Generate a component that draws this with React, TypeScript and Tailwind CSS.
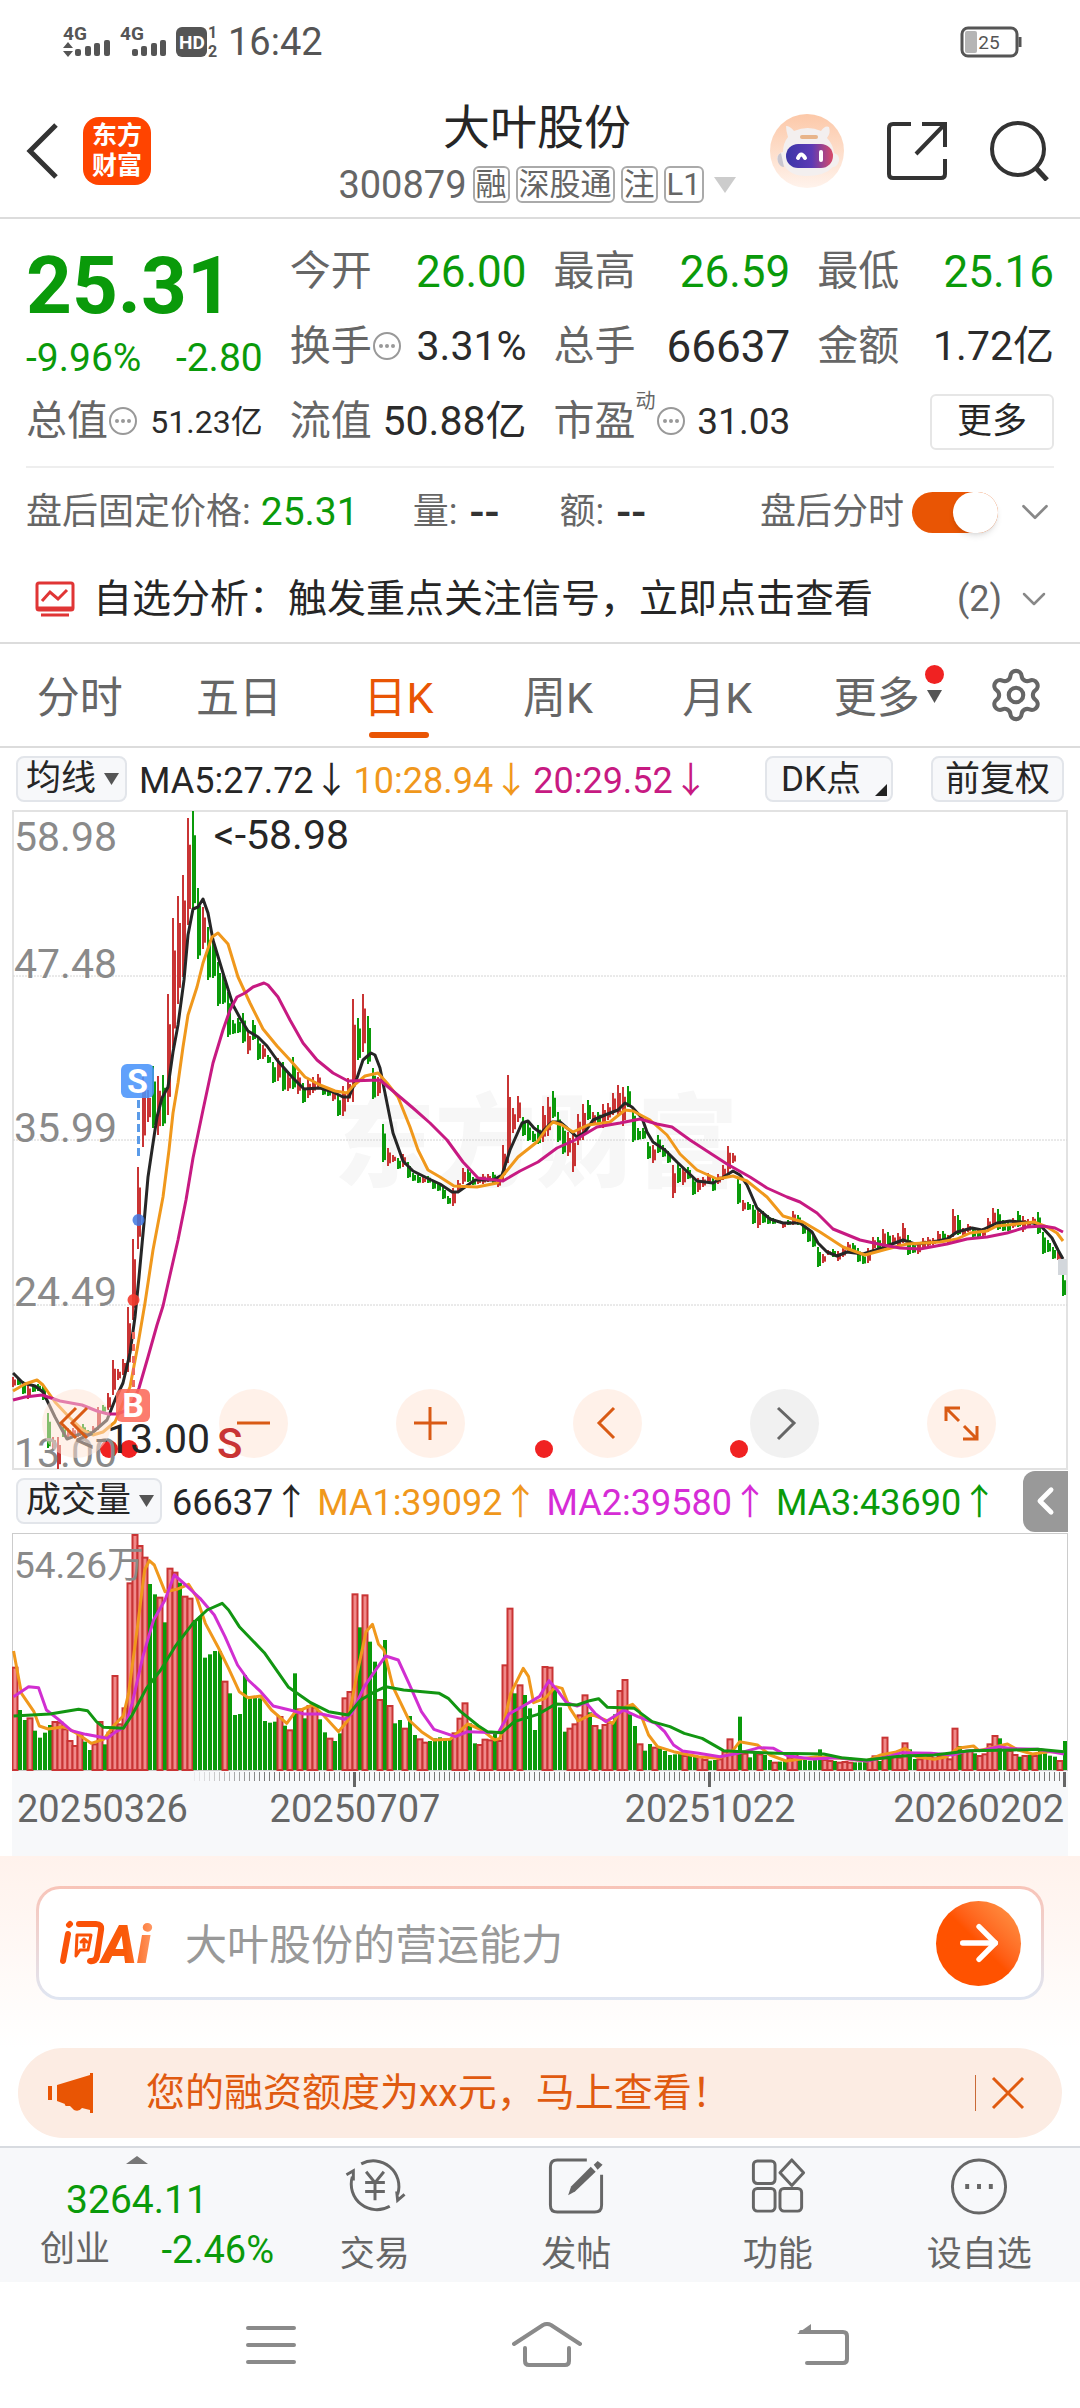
import { useState } from "react";
import type { ReactNode } from "react";
import { ArrowRight, ChevronDown, ChevronLeft, Settings } from "lucide-react";

// r = up day, g = down day, then high-low in chart units
const CANDLES = `
r1377-1387 g1377-1385 g1381-1394 r1385-1399 g1384-1392 g1384-1391 g1385-1400 g1413-1448 r1437-1450 r1437-1469
g1427-1437 r1428-1437 r1428-1437 r1430-1437 g1424-1437 g1430-1435 r1426-1433 r1407-1430 g1405-1412 r1393-1410
r1360-1395 r1369-1380 r1359-1375 r1307-1372 r1239-1320 r1167-1249 r1070-1147 r1090-1122 g1066-1128 r1076-1135
g1075-1126 r994-1115 r918-1048 r896-1004 r875-977 r818-925 g811-908 g888-959 r907-949 g927-980
g937-978 g962-1006 g975-1004 g992-1037 g1020-1034 g1018-1033 g1013-1043 r1030-1054 g1020-1040 g1038-1060
r1045-1059 g1055-1063 g1062-1083 r1058-1081 g1062-1091 r1073-1091 g1057-1089 r1072-1094 g1083-1103 r1079-1098
r1077-1093 r1074-1088 g1085-1095 g1087-1096 r1090-1101 g1095-1116 r1086-1116 r1078-1102 r999-1102 g1018-1060
r994-1052 g1016-1064 g1068-1099 r1077-1096 g1124-1162 r1148-1166 r1155-1162 g1158-1169 r1154-1167 g1162-1178
g1173-1181 g1175-1183 r1177-1183 g1176-1183 g1180-1189 g1182-1191 g1187-1199 g1196-1204 r1188-1206 r1180-1193
r1168-1184 g1169-1182 g1177-1185 r1177-1184 r1174-1184 r1174-1182 g1172-1183 r1178-1187 r1145-1180 r1075-1163
r1108-1133 r1096-1122 g1117-1136 g1123-1141 g1131-1142 g1125-1144 r1106-1142 r1097-1136 g1091-1118 g1112-1142
g1123-1154 r1132-1156 r1133-1172 r1114-1145 r1104-1140 g1100-1120 r1112-1125 g1112-1123 r1104-1128 r1103-1120
r1093-1115 r1085-1117 r1087-1126 g1086-1107 g1107-1142 g1128-1140 g1128-1139 g1142-1159 r1145-1163 g1135-1153
g1145-1157 g1151-1163 r1165-1198 g1163-1183 r1167-1185 g1167-1179 g1177-1195 r1178-1192 r1177-1187 r1173-1183
g1178-1191 r1174-1184 r1165-1180 r1146-1173 r1153-1163 g1177-1204 r1200-1211 g1202-1210 g1205-1224 r1208-1228
g1211-1223 g1215-1224 g1218-1224 g1220-1223 r1222-1228 g1220-1225 r1211-1225 g1215-1225 g1223-1234 g1228-1242
g1235-1247 g1247-1267 r1254-1263 r1250-1255 g1249-1257 r1251-1261 r1247-1257 r1242-1252 g1243-1252 g1248-1262
g1254-1264 r1248-1263 r1237-1250 g1237-1250 r1229-1247 g1232-1247 r1235-1245 r1233-1247 r1223-1243 g1235-1255
g1243-1253 r1242-1254 r1238-1249 r1237-1247 r1238-1245 r1231-1243 g1231-1242 r1235-1243 r1209-1237 g1215-1235
r1228-1235 r1224-1232 g1228-1237 g1228-1237 r1228-1237 r1218-1232 r1208-1227 g1209-1230 g1220-1231 g1222-1231
r1218-1228 g1211-1227 r1216-1232 r1219-1227 r1217-1224 g1212-1234 g1232-1254 g1240-1252 g1247-1259 r1252-1260
g1275-1296`
  .trim()
  .split(/\s+/)
  .map((item) => {
    const [high, low] = item.slice(1).split("-").map(Number);
    return { up: item[0] === "r", high, low };
  });

const VOLUMES = `
r620 g750 g780 r772 g812 g833 g818 g795 r783 r785 r805 r840 r855 r822 g845 g870 r850 r783 g853 r815
r645 r790 r742 r367 r222 r255 r290 g372 g403 r410 g487 r323 r335 g368 r407 r413 g480 g470 g593 g583
g573 g573 r662 g700 g765 g762 g645 g710 g710 g715 g783 g788 g785 r768 g797 r808 g640 r745 g775 r735
r740 g778 g817 r833 g843 g820 r712 r693 r400 g502 r403 g545 g605 r717 g540 r735 g790 g780 r803 g768
g825 r835 r845 g843 g835 g832 g838 g840 r817 r773 r727 g790 g850 r852 r836 r838 g818 r840 r613 r443
g700 r673 g705 g745 g810 g735 r618 r620 g690 g742 g815 r803 r790 r763 r703 g757 r795 g808 r792 r785
g763 r690 r657 g763 g798 r850 g872 g852 r860 g865 g873 g885 g883 g880 r885 g885 g885 r888 r897 g902
g900 r895 r872 r835 r875 g770 r878 g892 g878 r880 g885 g900 r905 g905 g902 r890 r878 g895 g900 g902
g900 g868 r897 r900 g903 r905 r903 r905 g907 g907 g905 r900 r886 g903 r830 g885 r885 r890 r847 g868
g897 r895 r890 r885 r892 r885 r885 r895 r803 g858 r870 r870 g880 r885 r880 r850 r825 g835 g865 r870
r882 g890 r885 g885 r885 g865 g880 g887 g890 r900 g843`
  .trim()
  .split(/\s+/)
  .map((item) => ({ up: item[0] === "r", top: 1460 + Number(item.slice(1)) / 3 }));

const MA5 =
  "13,1373 23,1383 35,1386 43,1392 55,1417 67,1439 80,1434 92,1433 107,1420 115,1400 123,1383 130,1353 135,1317 139,1277 144,1223 148,1177 152,1150 157,1117 162,1098 168,1087 173,1052 178,1025 184,980 188,935 193,909 198,907 203,899 208,913 213,940 223,973 233,1005 240,1018 248,1031 258,1037 267,1046 277,1060 292,1077 304,1089 320,1088 333,1092 343,1097 349,1097 357,1078 363,1060 371,1053 375,1055 380,1068 387,1103 393,1133 403,1161 413,1171 427,1178 440,1184 452,1192 458,1192 475,1180 493,1180 502,1175 510,1150 522,1123 528,1121 534,1128 541,1133 552,1122 560,1122 567,1128 577,1137 585,1132 593,1120 605,1115 618,1110 625,1103 632,1107 642,1118 647,1132 653,1142 665,1150 677,1162 697,1181 713,1183 722,1178 733,1171 740,1175 747,1185 757,1208 770,1219 783,1223 800,1223 812,1232 818,1243 827,1252 837,1256 847,1252 863,1254 882,1248 892,1244 903,1240 915,1244 933,1242 947,1239 957,1232 972,1228 982,1230 997,1223 1010,1221 1033,1223 1040,1225 1052,1238 1058,1250 1063,1259";
const MA10 =
  "13,1391 25,1384 37,1380 43,1385 55,1402 70,1418 83,1430 93,1435 103,1432 115,1422 123,1403 130,1387 137,1350 145,1303 153,1250 163,1197 169,1150 173,1113 178,1083 183,1047 188,1015 197,987 203,963 212,937 218,933 228,944 238,977 250,1003 263,1029 277,1046 290,1060 305,1077 320,1085 335,1091 347,1093 353,1086 365,1076 378,1073 387,1083 398,1097 410,1127 418,1150 428,1170 440,1177 454,1186 477,1187 497,1183 505,1173 518,1157 537,1142 547,1128 553,1122 562,1125 573,1132 588,1125 610,1122 625,1110 633,1111 650,1120 667,1135 680,1154 697,1170 717,1179 733,1176 747,1181 767,1197 783,1216 803,1222 820,1232 843,1247 865,1255 887,1249 907,1244 940,1242 957,1239 970,1233 987,1231 997,1226 1017,1224 1034,1222 1047,1227 1057,1233 1063,1241";
const MA20 =
  "13,1400 25,1397 42,1395 60,1401 82,1405 97,1411 108,1414 117,1414 125,1411 133,1402 139,1388 148,1357 157,1325 163,1306 170,1275 178,1240 186,1200 193,1158 203,1110 213,1063 223,1030 230,1010 237,997 245,993 253,987 264,983 268,985 278,997 290,1020 303,1043 317,1060 333,1073 348,1081 380,1080 400,1097 413,1108 430,1123 447,1140 463,1162 478,1178 503,1181 520,1171 538,1162 557,1148 575,1140 597,1127 620,1123 640,1119 657,1124 672,1127 690,1140 710,1153 727,1164 750,1177 767,1188 787,1197 800,1202 817,1213 833,1229 860,1240 883,1245 900,1248 920,1249 947,1244 967,1239 987,1237 1007,1233 1027,1227 1043,1226 1055,1228 1063,1232";

const VOL_MA1 =
  "38,573 60,700 95,755 110,798 135,807 180,800 215,820 255,850 290,838 320,795 345,768 360,700 385,500 405,330 418,302 432,315 462,395 495,388 528,373 550,410 575,490 610,560 640,625 670,695 695,713 730,708 760,750 803,790 825,758 875,735 905,765 948,815 975,780 1000,640 1025,515 1043,493 1060,553 1075,570 1100,680 1145,780 1180,815 1215,840 1260,838 1310,792 1350,810 1385,840 1400,835 1430,700 1465,625 1480,650 1494,728 1526,715 1556,680 1574,685 1596,745 1619,783 1656,763 1691,778 1716,790 1741,745 1771,733 1791,755 1816,825 1841,860 1886,875 1956,890 2011,895 2046,880 2071,845 2121,855 2156,885 2201,903 2286,890 2356,895 2426,903 2466,885 2506,877 2534,865 2566,890 2616,898 2651,890 2681,865 2726,858 2741,872 2776,863 2821,852 2851,870 2891,882 2936,875 2979,875";
const VOL_MA2 =
  "38,710 80,680 108,683 130,750 160,775 200,812 240,823 300,835 325,815 350,800 370,730 400,590 430,480 462,420 488,345 520,375 560,415 600,465 630,530 665,615 695,660 730,695 765,738 820,752 850,762 900,762 965,778 985,760 1020,680 1055,625 1080,588 1115,600 1145,670 1180,755 1215,808 1275,830 1310,815 1395,818 1425,762 1470,735 1510,710 1537,662 1560,690 1586,728 1616,738 1641,728 1666,760 1696,785 1726,765 1746,750 1786,770 1836,790 1861,815 1886,855 1911,873 1956,880 2016,890 2066,880 2126,863 2166,865 2206,888 2276,897 2346,893 2426,903 2486,890 2526,878 2606,880 2666,885 2706,873 2756,870 2796,860 2836,866 2906,868 2979,882";
const VOL_MA3 =
  "38,768 140,762 220,748 245,752 270,785 290,802 345,805 370,765 410,685 450,630 490,560 540,490 580,450 622,430 640,450 670,500 740,578 808,682 870,728 920,755 975,765 1010,720 1050,695 1080,680 1130,690 1230,700 1255,715 1290,755 1340,798 1365,815 1405,818 1440,785 1506,763 1556,732 1616,735 1651,722 1676,716 1701,742 1776,745 1826,785 1876,800 1916,820 1966,835 2026,872 2106,877 2176,880 2306,882 2356,893 2426,900 2526,888 2616,885 2716,872 2836,870 2906,868 2979,875";

const volumeLine = (points: string) =>
  points
    .split(" ")
    .map((pair) => {
      const [x, y] = pair.split(",").map(Number);
      return `${x / 2.8},${1460 + y / 3}`;
    })
    .join(" ");

const RED = "#c93434";
const GREEN = "#0a9a0a";

const StatusBar = () => (
  <div className="flex h-[84px] items-center justify-between pr-[58px] pl-[62px] text-[#555]">
    <div className="flex items-center">
      <svg className="overflow-visible" width="52" height="36" viewBox="0 0 52 36" fill="currentColor">
        <text x="1" y="16" fontSize="19" fontWeight="bold">4G</text>
        <path d="M1 24l5-6 5 6zM1 27l5 6 5-6z" />
        <rect x="13" y="25" width="6" height="7" rx="2" />
        <rect x="23" y="22" width="6" height="10" rx="2" />
        <rect x="32" y="19" width="6" height="13" rx="2" />
        <rect x="42" y="16" width="6" height="16" rx="2" />
      </svg>
      <svg className="overflow-visible" width="60" height="36" viewBox="0 0 60 36" fill="currentColor">
        <text x="6" y="16" fontSize="19" fontWeight="bold">4G</text>
        <rect x="18" y="25" width="6" height="7" rx="2" />
        <rect x="27" y="22" width="6" height="10" rx="2" />
        <rect x="37" y="19" width="6" height="13" rx="2" />
        <rect x="46" y="16" width="6" height="16" rx="2" />
      </svg>
      <svg className="overflow-visible" width="44" height="36" viewBox="0 0 44 36" fill="currentColor">
        <rect x="2" y="3" width="31" height="30" rx="6" />
        <text x="5" y="25" fontSize="19" fontWeight="bold" fill="white">HD</text>
        <text x="34" y="14" fontSize="16" fontWeight="bold">1</text>
        <text x="34" y="33" fontSize="16" fontWeight="bold">2</text>
      </svg>
      <span className="ml-[10px] text-[38px] leading-none">16:42</span>
    </div>
    <svg width="62" height="32" viewBox="0 0 62 32">
      <rect x="2" y="2" width="55" height="28" rx="6" fill="none" stroke="#555" strokeWidth="3" />
      <path d="M60 11v10" stroke="#555" strokeWidth="3" />
      <rect x="5" y="5" width="12" height="22" rx="2" fill="#b5b5b5" />
      <text x="29" y="23" fontSize="19" textAnchor="middle" fill="#555">25</text>
    </svg>
  </div>
);

const Robot = () => (
  <svg width="76" height="76" viewBox="0 0 76 76">
    <defs>
      <linearGradient id="halo" x1="0" y1="0" x2="0" y2="1">
        <stop offset="0" stopColor="#fcc8a8" />
        <stop offset="1" stopColor="#fff3ec" />
      </linearGradient>
      <linearGradient id="visor" x1="0" y1="0" x2="1" y2="0">
        <stop offset="0" stopColor="#3c35a8" />
        <stop offset="0.55" stopColor="#5d3bb5" />
        <stop offset="1" stopColor="#d84a68" />
      </linearGradient>
    </defs>
    <circle cx="38" cy="38" r="37" fill="url(#halo)" />
    <path d="M17 13q4 0 8 5 14-6 27 0 4-6 8-4 2 6-2 11 6 6 7 15 6 2 5 8-2 6-6 6-8 9-27 9-16 0-22-11-6 0-7-7 1-5 6-6 0-9 5-15-2-6-2-11z" fill="#f3efef" />
    <path d="M12 40q-5 2-3 9 2 5 6 5z" fill="#c9c6cf" />
    <rect x="17" y="31" width="47" height="24" rx="12" fill="url(#visor)" />
    <path d="M29 45q3-7 7 0M52 39v8" stroke="white" strokeWidth="4" strokeLinecap="round" fill="none" />
    <rect x="31" y="22" width="18" height="4" rx="2" fill="#e8b48a" />
  </svg>
);

const Tag = ({ children }: { children: ReactNode }) => (
  <span className="flex h-[37px] items-center rounded-md border-2 border-[#aaa] px-[1px] text-[31px] leading-none">
    {children}
  </span>
);

const Header = () => (
  <header className="flex h-[135px] items-center border-b-2 border-[#dcdcdc] pr-[31px] pl-[25px]">
    <div className="flex flex-1 items-center gap-6">
      <button aria-label="返回">
        <svg width="34" height="56" viewBox="0 0 34 56" fill="none" stroke="#333" strokeWidth="5">
          <path d="M31 2L5 28l26 26" />
        </svg>
      </button>
      <a
        href="#home"
        className="flex size-[68px] flex-col items-center justify-center rounded-2xl bg-[#ff4400] text-[25px] leading-[30px] font-bold text-white"
      >
        东方
        <br />
        财富
      </a>
    </div>
    <div className="flex flex-col items-center gap-[14px] pt-[6px]">
      <h1 className="text-[47px] leading-[48px] text-[#262626]">大叶股份</h1>
      <div className="flex items-center gap-[6px] text-[#666]">
        <span className="text-[38px] leading-none">300879</span>
        <Tag>融</Tag>
        <Tag>深股通</Tag>
        <Tag>注</Tag>
        <Tag>L1</Tag>
        <svg className="ml-1" width="22" height="16" viewBox="0 0 22 16">
          <path d="M0 0h22L11 16z" fill="#ccc" />
        </svg>
      </div>
    </div>
    <div className="flex flex-1 items-center justify-end gap-[42px]">
      <button aria-label="助手">
        <Robot />
      </button>
      <button aria-label="分享">
        <svg width="60" height="60" viewBox="0 0 60 60" fill="none" stroke="#333" strokeWidth="4">
          <path d="M24 3H6Q2 3 2 7v46q0 4 4 4h48q4 0 4-4V38M35 3h23v23M58 3L29 33" />
        </svg>
      </button>
      <button aria-label="搜索">
        <svg width="60" height="60" viewBox="0 0 60 60" fill="none" stroke="#333" strokeWidth="4">
          <circle cx="29" cy="28" r="26" />
          <path d="M46 46l12 13" strokeWidth="5" />
        </svg>
      </button>
    </div>
  </header>
);

const Hint = () => (
  <svg className="shrink-0" width="31" height="31" viewBox="0 0 31 31">
    <circle cx="15" cy="15" r="13" fill="none" stroke="#999" strokeWidth="2" />
    <circle cx="9" cy="15" r="2" fill="#999" />
    <circle cx="15" cy="15" r="2" fill="#999" />
    <circle cx="21" cy="15" r="2" fill="#999" />
  </svg>
);

interface QuoteProps {
  label: string;
  value: string;
  size?: string;
  green?: boolean;
  hint?: boolean;
  sup?: string;
}

const Quote = ({ label, value, size = "text-[44px]", green, hint, sup }: QuoteProps) => (
  <div className="flex h-[75px] items-center justify-between whitespace-nowrap">
    <dt className="flex items-center text-[41px] leading-none text-[#666]">
      {label}
      {sup && <sup className="self-start text-[20px] leading-none">{sup}</sup>}
      {hint && <Hint />}
    </dt>
    <dd className={`leading-none ${size} ${green ? "text-[#0a9a0a]" : "text-[#2b2b2b]"}`}>{value}</dd>
  </div>
);

const QuotePanel = () => (
  <dl className="mx-[26px] grid grid-cols-4 gap-x-[27px] border-b-2 border-[#eee] pt-[15px] pb-[7px]">
    <div className="row-span-2 flex flex-col text-[#0a9a0a]">
      <dd className="pt-[16px] text-[80px] leading-[72px] font-bold">25.31</dd>
      <dd className="flex justify-between pt-[18px] text-[39px] leading-[36px] whitespace-nowrap">
        <span>-9.96%</span>
        <span>-2.80</span>
      </dd>
    </div>
    <Quote label="今开" value="26.00" green />
    <Quote label="最高" value="26.59" green />
    <Quote label="最低" value="25.16" green />
    <Quote label="换手" value="3.31%" size="text-[41px]" hint />
    <Quote label="总手" value="66637" />
    <Quote label="金额" value="1.72亿" size="text-[41px]" />
    <Quote label="总值" value="51.23亿" size="text-[32px]" hint />
    <Quote label="流值" value="50.88亿" size="text-[41px]" />
    <Quote label="市盈" value="31.03" size="text-[37px]" sup="动" hint />
    <div className="flex items-center justify-end">
      <button className="h-14 w-[124px] rounded-md border-2 border-[#e6e6e6] text-[35px] leading-none text-[#262626]">更多</button>
    </div>
  </dl>
);

const AfterHours = () => {
  const [on, setOn] = useState(true);
  return (
    <div className="flex h-[88px] items-center px-[26px] text-[36px] leading-none whitespace-nowrap text-[#666]">
      <span>盘后固定价格:</span>
      <span className="ml-[10px] text-[39px] text-[#0a9a0a]">25.31</span>
      <span className="ml-[54px]">量:</span>
      <span className="ml-3 w-[44px] text-[44px] font-medium text-[#333]">--</span>
      <span className="ml-[46px]">额:</span>
      <span className="ml-3 text-[44px] font-medium text-[#333]">--</span>
      <label htmlFor="after-hours" className="ml-auto">盘后分时</label>
      <input
        id="after-hours"
        type="checkbox"
        role="switch"
        checked={on}
        onChange={() => setOn(!on)}
        className="ml-2 h-[41px] w-[86px] appearance-none rounded-full bg-[#ccc] before:block before:size-[41px] before:rounded-full before:bg-white before:shadow-md checked:bg-[#e95504] checked:before:ml-auto checked:before:w-[45px]"
      />
      <ChevronDown className="ml-[14px] -mr-1 text-[#888]" size={46} strokeWidth={1.4} />
    </div>
  );
};

const Analysis = () => (
  <a href="#analysis" className="flex h-[88px] items-center border-b-2 border-[#dcdcdc] pr-[26px] pl-[35px] text-[39px] leading-none whitespace-nowrap text-[#262626]">
    <svg width="40" height="36" viewBox="0 0 40 36" fill="none" stroke="#e03535" strokeWidth="3">
      <rect x="2" y="2" width="36" height="27" rx="2" />
      <path d="M7 20l8-9 8 7 9-9M6 34h28M3 27h34" />
    </svg>
    <span className="ml-[18px]">自选分析：触发重点关注信号，立即点击查看</span>
    <span className="ml-auto text-[36px] text-[#666]">(2)</span>
    <ChevronDown className="ml-3 text-[#888]" size={40} strokeWidth={1.5} />
  </a>
);

const TABS = ["分时", "五日", "日K", "周K", "月K", "更多"];

const PeriodTabs = () => {
  const [active, setActive] = useState("日K");
  return (
    <div role="tablist" className="flex h-[104px] border-b-2 border-[#dcdcdc] pr-1">
      {TABS.map((tab) => (
        <button
          key={tab}
          role="tab"
          aria-selected={tab === active}
          onClick={() => setActive(tab)}
          className={`relative flex flex-4 items-center justify-center pt-[6px] text-[43px] leading-none ${
            tab === active ? "text-[#e95504]" : "text-[#666]"
          }`}
        >
          {tab}
          {tab === "更多" && (
            <>
              <span className="absolute top-[21px] right-[12px] size-[19px] rounded-full bg-[#f02222]" />
              <svg className="absolute top-[46px] right-[14px]" width="15" height="13" viewBox="0 0 15 13">
                <path d="M0 0h15L7.500 13z" fill="#555" />
              </svg>
            </>
          )}
          {tab === active && <span className="absolute bottom-2 h-[6px] w-[60px] rounded-sm bg-[#e95504]" />}
        </button>
      ))}
      <button aria-label="设置" className="flex flex-3 items-center justify-center text-[#666]">
        <Settings size={58} strokeWidth={1.7} />
      </button>
    </div>
  );
};

interface PickerProps {
  label: string;
  options: string[];
}

const Picker = ({ label, options }: PickerProps) => (
  <div className="relative">
    <select
      aria-label={label}
      className="h-[46px] appearance-none rounded-lg border-2 border-[#e2e5ea] bg-[#f7f8fa] pr-7 pl-2 text-[35px] leading-[42px] text-[#262626]"
    >
      {options.map((option) => (
        <option key={option}>{option}</option>
      ))}
    </select>
    <svg className="pointer-events-none absolute top-[17px] right-2" width="15" height="12" viewBox="0 0 15 12">
      <path d="M0 0h15L7.500 12z" fill="#555" />
    </svg>
  </div>
);

const AverageBar = () => (
  <div className="flex h-[62px] items-center px-1 text-[36px] leading-none whitespace-nowrap">
    <Picker label="指标" options={["均线"]} />
    <div className="ml-3 flex gap-[4px] pt-1">
      <span className="text-[#262626]">MA5:27.72↓</span>
      <span className="text-[#f0981c]">10:28.94↓</span>
      <span className="text-[#c71a82]">20:29.52↓</span>
    </div>
    <button className="relative ml-auto h-[46px] w-[128px] rounded-lg border-2 border-[#e2e5ea] bg-[#f7f8fa] pr-4 text-[35px] leading-none text-[#262626]">
      DK点
      <svg className="absolute right-1 bottom-1" width="12" height="12" viewBox="0 0 12 12">
        <path d="M12 0v12H0z" fill="#222" />
      </svg>
    </button>
    <button className="ml-[38px] h-[46px] w-[133px] rounded-lg border-2 border-[#e2e5ea] bg-[#f7f8fa] text-[35px] leading-none text-[#262626]">
      前复权
    </button>
  </div>
);

const CHART_TOOLS = [
  { label: "最早", path: "M34 19L19 34l15 15M45 19L30 34l15 15", grey: false },
  { label: "缩小", path: "M18 34h33", grey: false },
  { label: "放大", path: "M18 34h33M34 18v33", grey: false },
  { label: "前移", path: "M41 19L26 34l15 15", grey: false },
  { label: "后移", path: "M28 19l16 15-16 16", grey: true },
  { label: "全屏", path: "M19 32V19h14M20 20l12 12M50 37v13H36M49 49L37 37", grey: false },
];

const PRICE_LABELS = [
  { text: "58.98", y: 851 },
  { text: "47.48", y: 978 },
  { text: "35.99", y: 1142 },
  { text: "24.49", y: 1306 },
  { text: "13.00", y: 1467 },
];

const PriceChart = () => {
  const step = 1050 / (CANDLES.length - 1);
  return (
    <div className="relative">
      <svg className="block w-full" viewBox="12 810 1056 660">
        <rect x="13" y="811" width="1054" height="658" fill="white" stroke="#e2e2e2" strokeWidth="2" />
        <text x="334" y="1179" fontSize="101" fontWeight="900" fill="#f7f7f7">东方财富</text>
        {[976, 1140, 1305].map((y) => (
          <path key={y} d={`M13 ${y}H1067`} stroke="#d4d4d4" strokeWidth="1" strokeDasharray="2 1" />
        ))}
        {CANDLES.map(({ up, high, low }, i) => {
          const x = 13 + i * step;
          const span = low - high;
          return (
            <g key={i} fill={up ? RED : GREEN}>
              <rect x={x - 1} y={high} width="2" height={span} />
              <rect x={x - 1} y={high + span * 0.25} width="4" height={span * (up ? 0.6 : 0.7)} />
            </g>
          );
        })}
        <g fill="none" strokeWidth="3" strokeLinejoin="round">
          <polyline points={MA5} stroke="#262626" />
          <polyline points={MA10} stroke="#f0981c" />
          <polyline points={MA20} stroke="#c71a82" />
        </g>
        <rect x="1058" y="1259" width="9" height="16" fill="#d3d7dc" />
        <path d="M138.500 1100v58" stroke="#5b9be8" strokeWidth="3" strokeDasharray="8 4" />
        <path d="M133.500 1332v56" stroke="#ee6a5c" strokeWidth="3" strokeDasharray="7 5" />
        <circle cx="138.500" cy="1220" r="6" fill="#3f78e0" fillOpacity="0.850" />
        <circle cx="133.500" cy="1300" r="6" fill="#f23a2e" fillOpacity="0.900" />
        <rect x="121" y="1064" width="33" height="34" rx="6" fill="#4a94fa" fillOpacity="0.880" />
        <text x="137.500" y="1093" fontSize="34" fontWeight="bold" textAnchor="middle" fill="white">S</text>
        <rect x="116" y="1389" width="34" height="33" rx="6" fill="#fc6a5a" fillOpacity="0.880" />
        <text x="133" y="1417" fontSize="34" fontWeight="bold" textAnchor="middle" fill="white">B</text>
        {[109, 129, 544, 739].map((x) => (
          <circle key={x} cx={x} cy="1449" r="9" fill="#f02222" />
        ))}
        <g fontSize="41">
          {PRICE_LABELS.map(({ text, y }) => (
            <text key={text} x="14" y={y} fill="#8a8a8a">{text}</text>
          ))}
          <text x="349" y="849" textAnchor="end" fill="#262626">&lt;-58.98</text>
          <text x="210" y="1453" textAnchor="end" fill="#262626">&lt;-13.00</text>
        </g>
      </svg>
      <div className="absolute inset-x-0 bottom-[12px] flex justify-between pr-[72px] pl-[30px]">
        {CHART_TOOLS.map(({ label, path, grey }) => (
          <button
            key={label}
            aria-label={label}
            className={`size-[69px] rounded-full ${grey ? "bg-[#e8e8e8]/60" : "bg-[#ffe3d4]/50"}`}
          >
            <svg viewBox="0 0 69 69" fill="none" stroke={grey ? "#666" : "#d95a14"} strokeWidth="3">
              <path d={path} />
            </svg>
          </button>
        ))}
      </div>
      <span className="absolute bottom-[5px] left-[205px] text-[42px] leading-none font-medium text-[#c93434]">S</span>
    </div>
  );
};

const VolumeBar = () => (
  <div className="flex h-[62px] items-center pl-1 text-[36px] leading-none whitespace-nowrap">
    <Picker label="副图指标" options={["成交量"]} />
    <div className="ml-[10px] flex gap-2 pt-1">
      <span className="text-[#262626]">66637↑</span>
      <span className="text-[#f0981c]">MA1:39092↑</span>
      <span className="text-[#d62cd6]">MA2:39580↑</span>
      <span className="text-[#0a9a0a]">MA3:43690↑</span>
    </div>
    <button aria-label="展开" className="ml-auto flex h-[61px] w-[45px] items-center justify-center rounded-l-xl bg-[#999] text-white">
      <ChevronLeft size={48} strokeWidth={2.5} />
    </button>
  </div>
);

const VolumeChart = () => (
  <svg className="block w-full" viewBox="12 1532 1056 324">
    <rect x="12" y="1771" width="1056" height="85" fill="#f7f8fa" />
    <rect x="12.500" y="1533.500" width="1055" height="237" fill="white" stroke="#ccc" />
    {VOLUMES.map(({ up, top }, i) => {
      const x = 12 + i * 5;
      return up ? (
        <rect key={i} x={x + 0.500} y={top + 1} width="5" height={1769 - top} fill="#f08a8a" stroke={RED} strokeWidth="2" />
      ) : (
        <rect key={i} x={x + 1} y={top} width="4" height={1770 - top} fill={GREEN} />
      );
    })}
    <text x="14" y="1578" fontSize="37" fill="#8a8a8a">54.26万</text>
    <g fill="none" strokeWidth="3" strokeLinejoin="round">
      <polyline points={volumeLine(VOL_MA1)} stroke="#f0981c" />
      <polyline points={volumeLine(VOL_MA2)} stroke="#d12fd1" />
      <polyline points={volumeLine(VOL_MA3)} stroke="#129612" />
    </g>
    {Array.from({ length: 174 }, (_, i) => (
      <path key={i} d={`M${194.5 + i * 5} 1772v9`} stroke="#777" strokeWidth="1" opacity={Math.min(1, 0.1 + i / 16)} />
    ))}
    <path d="M354.500 1772v15M709.500 1772v15M1064.500 1772v15" stroke="#666" strokeWidth="3" />
    <g fontSize="38" fill="#666">
      <text x="17" y="1822">20250326</text>
      <text x="355" y="1822" textAnchor="middle">20250707</text>
      <text x="710" y="1822" textAnchor="middle">20251022</text>
      <text x="1064" y="1822" textAnchor="end">20260202</text>
    </g>
  </svg>
);

const AskLogo = () => (
  <svg className="shrink-0" width="100" height="46" viewBox="0 0 100 46">
    <defs>
      <linearGradient id="ask" x1="0" y1="0" x2="1" y2="0">
        <stop offset="0.5" stopColor="#fa5a0a" />
        <stop offset="1" stopColor="#ff9a66" />
      </linearGradient>
    </defs>
    <g fill="none" stroke="#fa5208" strokeWidth="6" strokeLinecap="round" strokeLinejoin="round">
      <path d="M11 4l-1 1M9 14L4 41M20 4h17q6 0 5 6l-4 26q-1 6-7 5" />
      <path d="M18 15h14l-3 15h-8l-4 6z" strokeWidth="3" />
      <path d="M25 27v-7M22 22l3-3 3 3" strokeWidth="3" />
    </g>
    <g fontWeight="900" fontStyle="italic" fill="url(#ask)">
      <text x="43" y="43" fontSize="53">Ai</text>
    </g>
  </svg>
);

const AskPanel = () => (
  <div className="bg-linear-to-b from-[#fff2ec] to-white px-9 pt-[30px] pb-[48px]">
    <form className="rounded-3xl bg-linear-to-b from-[#f8c4b8] to-[#dfe6f2] p-[3px]">
      <div className="flex h-[108px] items-center rounded-[21px] bg-white pr-[20px] pl-[20px]">
        <AskLogo />
        <input
          aria-label="问AI"
          placeholder="大叶股份的营运能力"
          className="ml-[26px] min-w-0 flex-1 pt-1 text-[42px] leading-none placeholder:text-[#999]"
        />
        <button
          type="button"
          aria-label="发送"
          className="flex size-[85px] items-center justify-center rounded-full bg-linear-to-tr from-[#ff5200] from-50% to-[#ff9a4a] text-white"
        >
          <ArrowRight size={56} strokeWidth={2.3} />
        </button>
      </div>
    </form>
  </div>
);

const Notice = () => (
  <div className="mx-[18px] mb-2 flex h-[90px] items-center rounded-full bg-[#fcece3] pr-[36px] pl-[30px] text-[#e05a10]">
    <svg width="46" height="40" viewBox="0 0 46 40" fill="#e95504">
      <path d="M0 13h4v14H0zM9 12L42 2V0h3v40h-3v-3l-8-2q-3 4-8 2-2-2-4-4h-4q-2-1-1-2l-8-3z" />
    </svg>
    <span className="ml-[52px] text-[39px] leading-none">您的融资额度为xx元，马上查看！</span>
    <span className="mr-[14px] ml-auto h-9 w-px bg-[#c96a38]" />
    <button aria-label="关闭">
      <svg width="36" height="36" viewBox="0 0 36 36" stroke="#e05a10" strokeWidth="3">
        <path d="M3 3l30 30M33 3L3 33" />
      </svg>
    </button>
  </div>
);

const BAR_ITEMS = [
  {
    label: "交易",
    icon: (
      <>
        <path d="M18 9A26 26 0 0 1 55 40M47 52A26 26 0 0 1 9 22M3 20l7-4v10M62 40l-7 6-1-9" />
        <path d="M23 17l9 11 9-11M32 28v18M22 28h20M22 37h20" />
      </>
    ),
  },
  {
    label: "发帖",
    icon: (
      <>
        <path d="M43 5H13q-7 0-7 7v39q0 7 7 7h38q7 0 7-7V20" />
        <path d="M24 41l3-9 20-20 5 5-21 20z" fill="currentColor" stroke="none" />
        <path d="M50 10l4-4 5 4-5 5z" fill="currentColor" stroke="none" />
      </>
    ),
  },
  {
    label: "功能",
    icon: (
      <>
        <rect x="7" y="6" width="22" height="23" rx="4" />
        <rect x="7" y="34" width="22" height="23" rx="4" />
        <rect x="34" y="34" width="22" height="23" rx="4" />
        <path d="M46 5l12 13-12 13-12-13z" strokeLinejoin="round" />
      </>
    ),
  },
  {
    label: "设自选",
    icon: (
      <>
        <circle cx="32" cy="32" r="27" />
        <path d="M18 32h4M30 32h4M42 32h4" strokeWidth="5" />
      </>
    ),
  },
];

const BottomBar = () => (
  <nav className="flex h-[136px] border-t-2 border-[#d8dbe0] bg-[#f7f8fa] text-[#666]">
    <a href="#index" className="flex w-[274px] shrink-0 flex-col pt-2 text-[#0a9a0a]">
      <svg className="mx-auto" width="22" height="8" viewBox="0 0 22 8">
        <path d="M11 0l11 8H0z" fill="#777" />
      </svg>
      <span className="mt-[14px] text-center text-[39px] leading-[44px]">3264.11</span>
      <span className="mt-[6px] flex items-center justify-between pl-10 text-[38px] leading-[44px]">
        <span className="text-[35px] text-[#666]">创业</span>
        -2.46%
      </span>
    </a>
    {BAR_ITEMS.map(({ label, icon }) => (
      <button key={label} className="flex flex-1 flex-col items-center gap-[10px] pt-[7px]">
        <svg width="64" height="64" viewBox="0 0 64 64" fill="none" stroke="currentColor" strokeWidth="3">
          {icon}
        </svg>
        <span className="text-[35px] leading-[54px]">{label}</span>
      </button>
    ))}
  </nav>
);

const SystemNav = () => (
  <div className="flex h-[126px] items-center justify-between pr-[231px] pl-[246px]">
    <button aria-label="最近任务">
      <svg width="50" height="40" viewBox="0 0 50 40" stroke="#8a8a8a" strokeWidth="4" strokeLinecap="round">
        <path d="M2 3h46M2 20h46M2 37h46" />
      </svg>
    </button>
    <button aria-label="主屏幕">
      <svg width="70" height="46" viewBox="0 0 70 46" fill="none" stroke="#8a8a8a" strokeWidth="4" strokeLinecap="round">
        <path d="M2 22L31 3q4-2 8 0l29 19M13 26v13q0 4 4 4h36q4 0 4-4V26" />
      </svg>
    </button>
    <button aria-label="返回上一页">
      <svg width="52" height="46" viewBox="0 0 52 46" fill="none" stroke="#8a8a8a" strokeWidth="4" strokeLinecap="round">
        <path d="M4 10h42q4 0 4 4v23q0 4-4 4H10" />
        <path d="M0 12L14 2v10z" fill="#8a8a8a" stroke="none" />
      </svg>
    </button>
  </div>
);

const App = () => (
  <div className="min-h-screen bg-white font-[Roboto,'Noto_Sans_CJK_SC',sans-serif]">
    <StatusBar />
    <Header />
    <QuotePanel />
    <AfterHours />
    <Analysis />
    <PeriodTabs />
    <div className="px-3">
      <AverageBar />
      <PriceChart />
      <VolumeBar />
      <VolumeChart />
    </div>
    <AskPanel />
    <Notice />
    <BottomBar />
    <SystemNav />
  </div>
);

export default App;
